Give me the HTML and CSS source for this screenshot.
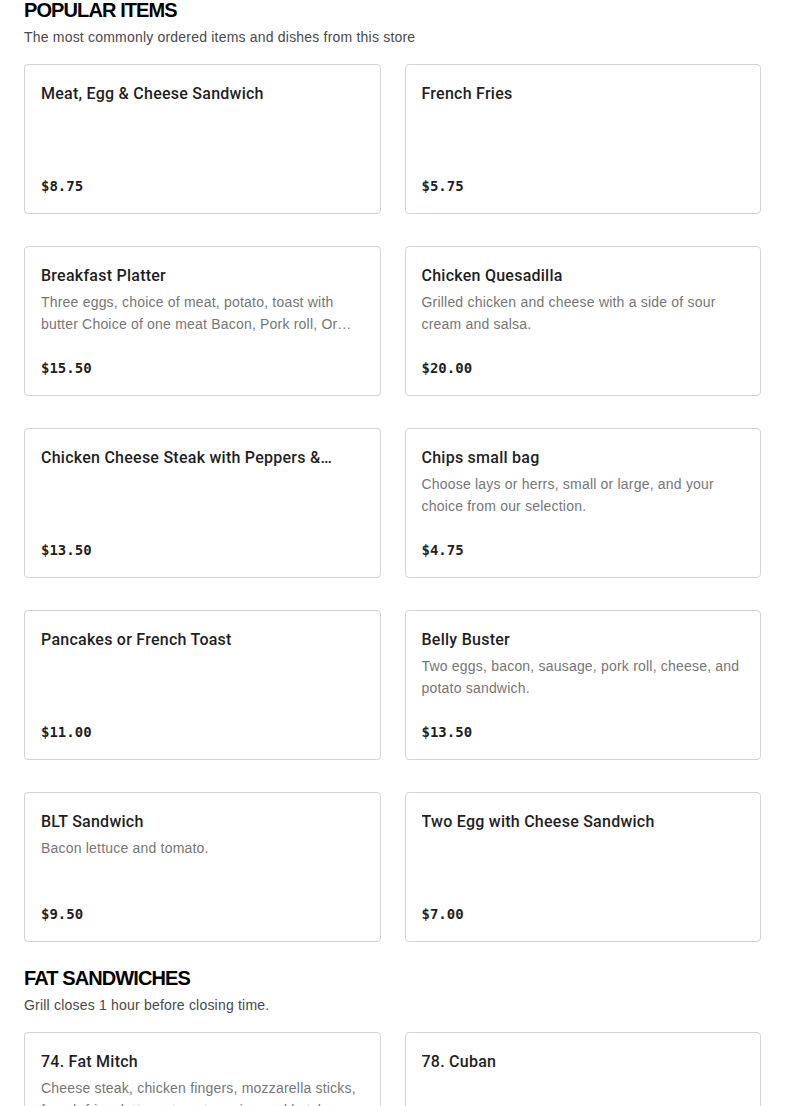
FILE: index.html
```html
<!DOCTYPE html>
<html lang="en">
<head>
<meta charset="utf-8">
<title>Menu</title>
<link rel="stylesheet" href="styles.css">
</head>
<body>
<main class="page">
  <section class="section">
    <h2 class="section-title">POPULAR ITEMS</h2>
    <p class="section-sub">The most commonly ordered items and dishes from this store</p>
    <div class="grid">
      <div class="card"><div class="item-name">Meat, Egg &amp; Cheese Sandwich</div><div class="item-price">$8.75</div></div>
      <div class="card"><div class="item-name">French Fries</div><div class="item-price">$5.75</div></div>
      <div class="card"><div class="item-name">Breakfast Platter</div><div class="item-desc">Three eggs, choice of meat, potato, toast with butter Choice of one meat Bacon, Pork roll, Or Sausage.</div><div class="item-price">$15.50</div></div>
      <div class="card"><div class="item-name">Chicken Quesadilla</div><div class="item-desc">Grilled chicken and cheese with a side of sour cream and salsa.</div><div class="item-price">$20.00</div></div>
      <div class="card"><div class="item-name">Chicken Cheese Steak with Peppers &amp; Onions</div><div class="item-price">$13.50</div></div>
      <div class="card"><div class="item-name">Chips small bag</div><div class="item-desc">Choose lays or herrs, small or large, and your choice from our selection.</div><div class="item-price">$4.75</div></div>
      <div class="card"><div class="item-name">Pancakes or French Toast</div><div class="item-price">$11.00</div></div>
      <div class="card"><div class="item-name">Belly Buster</div><div class="item-desc">Two eggs, bacon, sausage, pork roll, cheese, and potato sandwich.</div><div class="item-price">$13.50</div></div>
      <div class="card"><div class="item-name">BLT Sandwich</div><div class="item-desc">Bacon lettuce and tomato.</div><div class="item-price">$9.50</div></div>
      <div class="card"><div class="item-name">Two Egg with Cheese Sandwich</div><div class="item-price">$7.00</div></div>
    </div>
  </section>
  <section class="section">
    <h2 class="section-title">FAT SANDWICHES</h2>
    <p class="section-sub">Grill closes 1 hour before closing time.</p>
    <div class="grid">
      <div class="card"><div class="item-name">74. Fat Mitch</div><div class="item-desc">Cheese steak, chicken fingers, mozzarella sticks, french fries, lettuce, tomato, onion and ketchup.</div><div class="item-price">$14.00</div></div>
      <div class="card"><div class="item-name">78. Cuban</div><div class="item-price">$13.00</div></div>
    </div>
  </section>
</main>
</body>
</html>
```
FILE: styles.css
```css
html, body {
  margin: 0;
  padding: 0;
  background: #ffffff;
}
body {
  font-family: "Liberation Sans", Arial, sans-serif;
  color: #191919;
  overflow: hidden;
}
.page {
  padding: 0 24px;
  margin-top: -2px;
}
.section {
  margin-bottom: 24px;
}
.section-title {
  margin: 0;
  font-size: 20px;
  line-height: 24px;
  font-weight: 900;
  letter-spacing: -0.9px;
  color: #000000;
}
.section-sub {
  margin: 5px 0 0;
  font-size: 14px;
  line-height: 20px;
  letter-spacing: 0.2px;
  color: #494949;
}
.grid {
  margin-top: 17px;
  display: grid;
  grid-template-columns: 1fr 1fr;
  column-gap: 24px;
  row-gap: 32px;
}
.card {
  box-sizing: border-box;
  height: 150px;
  border: 1px solid #d3d3d3;
  border-radius: 4px;
  padding: 17px 16px 16px;
  display: flex;
  flex-direction: column;
  min-width: 0;
}
.item-name {
  font-family: Roboto, "Liberation Sans", sans-serif;
  font-size: 16px;
  line-height: 24px;
  font-weight: 500;
  letter-spacing: 0.25px;
  color: #1f1f1f;
  display: -webkit-box;
  -webkit-line-clamp: 1;
  -webkit-box-orient: vertical;
  overflow: hidden;
}
.item-desc {
  margin-top: 3px;
  font-size: 14px;
  line-height: 22px;
  letter-spacing: 0.2px;
  color: #767676;
  display: -webkit-box;
  -webkit-line-clamp: 2;
  -webkit-box-orient: vertical;
  overflow: hidden;
}
.item-price {
  margin-top: auto;
  font-family: "DejaVu Sans Mono", "Liberation Mono", monospace;
  font-size: 14px;
  line-height: 22px;
  font-weight: 700;
  color: #1f1f1f;
}
```
